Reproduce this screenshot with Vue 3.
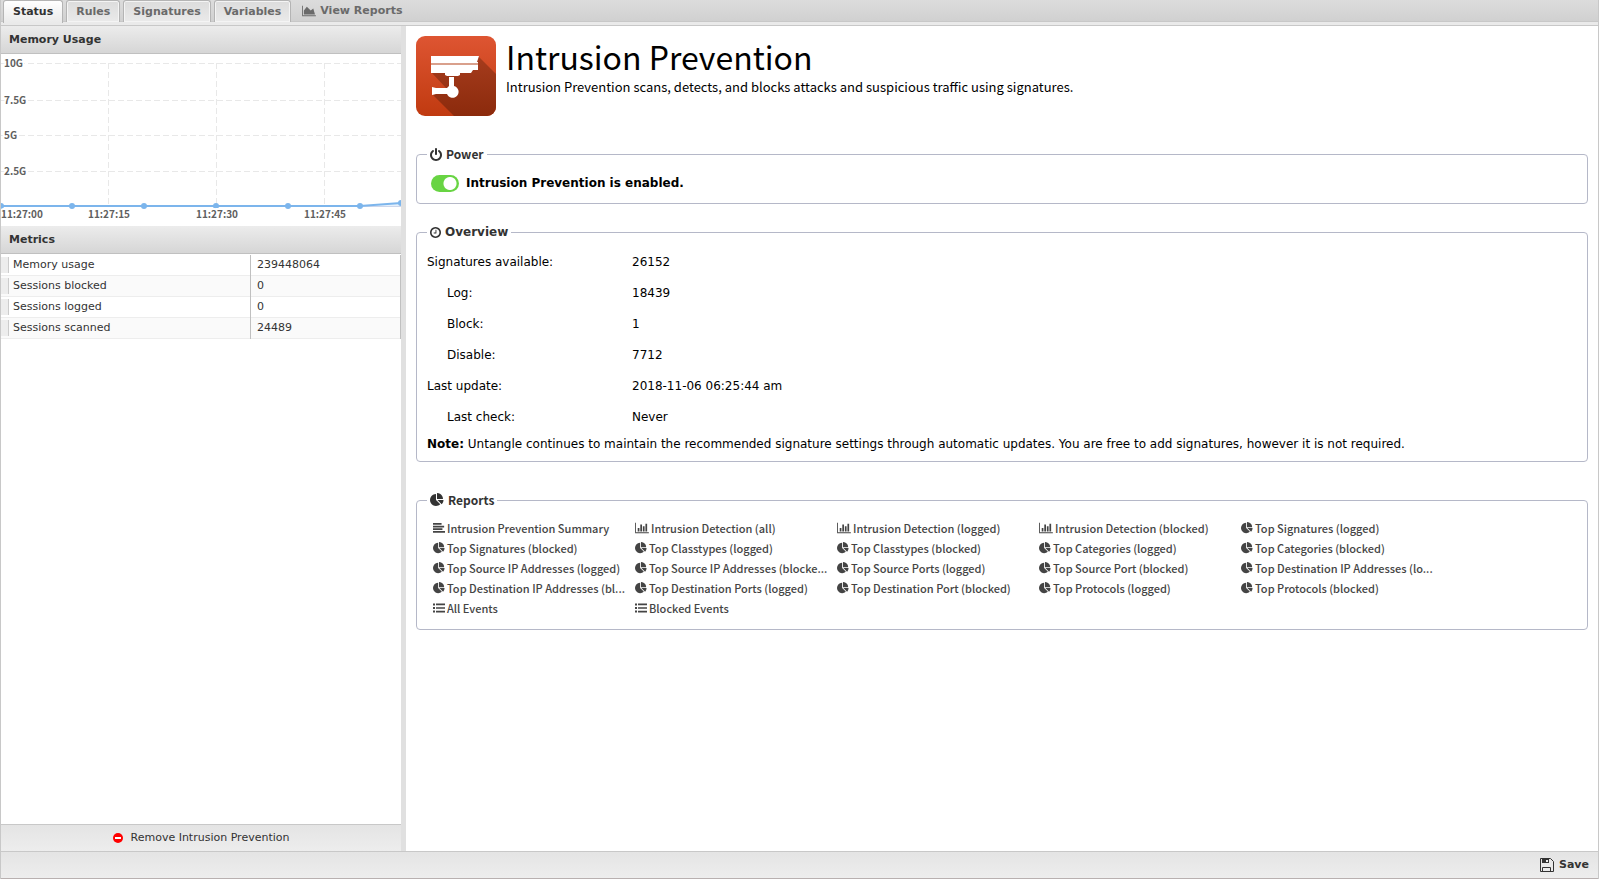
<script setup>
import { ref } from 'vue'

const tabs = ['Status', 'Rules', 'Signatures', 'Variables']
const activeTab = ref('Status')
const enabled = ref(true)

const metrics = [
  { name: 'Memory usage', value: '239448064' },
  { name: 'Sessions blocked', value: '0' },
  { name: 'Sessions logged', value: '0' },
  { name: 'Sessions scanned', value: '24489' },
]

const overview = [
  { label: 'Signatures available:', value: '26152' },
  { label: 'Log:', value: '18439', sub: true },
  { label: 'Block:', value: '1', sub: true },
  { label: 'Disable:', value: '7712', sub: true },
  { label: 'Last update:', value: '2018-11-06 06:25:44 am' },
  { label: 'Last check:', value: 'Never', sub: true },
]

const reports = [
  { icon: 'text', title: 'Intrusion Prevention Summary' },
  { icon: 'bars', title: 'Intrusion Detection (all)' },
  { icon: 'bars', title: 'Intrusion Detection (logged)' },
  { icon: 'bars', title: 'Intrusion Detection (blocked)' },
  { icon: 'pie', title: 'Top Signatures (logged)' },
  { icon: 'pie', title: 'Top Signatures (blocked)' },
  { icon: 'pie', title: 'Top Classtypes (logged)' },
  { icon: 'pie', title: 'Top Classtypes (blocked)' },
  { icon: 'pie', title: 'Top Categories (logged)' },
  { icon: 'pie', title: 'Top Categories (blocked)' },
  { icon: 'pie', title: 'Top Source IP Addresses (logged)' },
  { icon: 'pie', title: 'Top Source IP Addresses (blocke...' },
  { icon: 'pie', title: 'Top Source Ports (logged)' },
  { icon: 'pie', title: 'Top Source Port (blocked)' },
  { icon: 'pie', title: 'Top Destination IP Addresses (lo...' },
  { icon: 'pie', title: 'Top Destination IP Addresses (bl...' },
  { icon: 'pie', title: 'Top Destination Ports (logged)' },
  { icon: 'pie', title: 'Top Destination Port (blocked)' },
  { icon: 'pie', title: 'Top Protocols (logged)' },
  { icon: 'pie', title: 'Top Protocols (blocked)' },
  { icon: 'list', title: 'All Events' },
  { icon: 'list', title: 'Blocked Events' },
]

// icon paths, 1792 units high
const icons = {
  power: 'M1664 896q0 156-61 298t-164 245-245 164-298 61-298-61-245-164-164-245-61-298q0-182 80.5-343t226.5-270q43-32 95.5-25t83.5 50q32 42 24.5 94.5t-49.5 84.5q-98 74-151.5 181t-53.5 228q0 104 40.5 198.5t109.5 163.5 163.5 109.5 198.5 40.5 198.5-40.5 163.5-109.5 109.5-163.5 40.5-198.5q0-121-53.5-228t-151.5-181q-42-32-49.5-84.5t24.5-94.5q31-43 84-50t95 25q146 109 226.5 270t80.5 343zm-640-768v640q0 52-38 90t-90 38-90-38-38-90v-640q0-52 38-90t90-38 90 38 38 90z',
  clock: 'M1024 544v448q0 14-9 23t-23 9h-320q-14 0-23-9t-9-23v-64q0-14 9-23t23-9h224v-352q0-14 9-23t23-9h64q14 0 23 9t9 23zm416 352q0-148-73-273t-198-198-273-73-273 73-198 198-73 273 73 273 198 198 273 73 273-73 198-198 73-273zm224 0q0 209-103 385.5t-279.5 279.5-385.5 103-385.5-103-279.5-279.5-103-385.5 103-385.5 279.5-279.5 385.5-103 385.5 103 279.5 279.5 103 385.5z',
  pie: 'M768 890l546 546q-106 108-247.5 168t-298.5 60q-209 0-385.5-103t-279.5-279.5-103-385.5 103-385.5 279.5-279.5 385.5-103v762zm187 6h773q0 157-60 298.5t-168 247.5zm709-128h-768v-768q209 0 385.5 103t279.5 279.5 103 385.5z',
  bars: 'M640 896v512h-256v-512h256zm384-512v1024h-256v-1024h256zm1024 1152v128h-2048v-1536h128v1408h1920zm-640-896v768h-256v-768h256zm384-384v1152h-256v-1152h256z',
  area: 'M2048 1536v128h-2048v-1536h128v1408h1920zm-384-1024l256 896h-1664v-576l448-576 576 576z',
  text: 'M0 1344h1792v256h-1792zM0 946h1408v256h-1408zM0 548h1664v256h-1664zM0 150h1280v256h-1280z',
  list: 'M0 1280h300v300h-300zM0 746h300v300h-300zM0 212h300v300h-300zM450 1300h1342v260h-1342zM450 766h1342v260h-1342zM450 232h1342v260h-1342z',
}

const yTicks = [
  { y: 9, label: '10G' },
  { y: 46, label: '7.5G' },
  { y: 81, label: '5G' },
  { y: 117, label: '2.5G' },
]
const xTicks = [
  { x: 107, label: '11:27:15' },
  { x: 215, label: '11:27:30' },
  { x: 323, label: '11:27:45' },
]
const points = [[0, 152], [71, 152], [143, 152], [215, 152], [287, 152], [359, 152], [400, 149]]
const line = points.map(p => p.join(',')).join(' ')
</script>

<template>
  <div class="app">
    <nav class="tabs">
      <button
        v-for="t in tabs"
        :key="t"
        type="button"
        class="tab"
        :class="{ active: t === activeTab }"
        @click="activeTab = t"
      >{{ t }}</button>
      <a href="#reports" class="view-reports">
        <svg class="icon wide" viewBox="0 0 2048 1792"><path :d="icons.area" /></svg>
        View Reports
      </a>
    </nav>

    <div class="body">
      <aside class="side">
        <h2 class="panel-title">Memory Usage</h2>
        <svg class="chart" viewBox="0 0 400 172" role="img" aria-label="Memory usage">
          <g class="grid">
            <line v-for="t in yTicks" :key="t.label" x1="0" x2="400" :y1="t.y + 0.5" :y2="t.y + 0.5" />
            <line v-for="t in xTicks" :key="t.label" :x1="t.x + 0.5" :x2="t.x + 0.5" y1="9" y2="152" />
          </g>
          <line class="axis" x1="0" x2="400" y1="152.5" y2="152.5" />
          <polygon class="area" :points="`${line} 400,152`" />
          <polyline class="series" :points="line" />
          <circle v-for="p in points" :key="p[0]" class="dot" :cx="p[0]" :cy="p[1]" r="3" />
          <g class="labels">
            <text v-for="t in yTicks" :key="t.label" x="3" :y="t.y + 4">{{ t.label }}</text>
            <text x="0" y="164">11:27:00</text>
            <text v-for="t in xTicks" :key="t.label" :x="t.x + 1" y="164" text-anchor="middle">{{ t.label }}</text>
          </g>
        </svg>

        <h2 class="panel-title">Metrics</h2>
        <table class="metrics">
          <tbody>
            <tr v-for="m in metrics" :key="m.name">
              <td class="grip"><span></span></td>
              <th scope="row">{{ m.name }}</th>
              <td class="value">{{ m.value }}</td>
            </tr>
          </tbody>
        </table>

        <div class="side-foot">
          <button type="button" class="remove">
            <svg viewBox="0 0 10 10"><circle cx="5" cy="5" r="5" /><rect x="2" y="4" width="6" height="2" /></svg>
            Remove Intrusion Prevention
          </button>
        </div>
      </aside>

      <main class="content">
        <header class="intro">
          <svg class="logo" viewBox="0 0 80 80">
            <defs>
              <linearGradient id="logoBg" x1="0" y1="0" x2="0" y2="1">
                <stop offset="0" stop-color="#de5532" />
                <stop offset="1" stop-color="#c03a10" />
              </linearGradient>
              <linearGradient id="logoShade" x1="0" y1="0" x2="0" y2="1">
                <stop offset="0" stop-color="#a63c1d" />
                <stop offset="1" stop-color="#8b2a0c" />
              </linearGradient>
              <clipPath id="logoClip"><rect width="80" height="80" rx="9" /></clipPath>
            </defs>
            <g clip-path="url(#logoClip)">
              <rect width="80" height="80" fill="url(#logoBg)" />
              <path fill="url(#logoShade)" d="M62 20l18 18v42H38L17 59l14-6L15 36z" />
            </g>
            <path fill="#fff" d="M15 20h48l-2 6h1v2H15zM15 29h47v5h-5l-2 3H44v2l-2 1H31l-2-1v-2H15z" />
            <rect x="15" y="27" width="47" height="2" fill="#d9a08c" />
            <path fill="#fff" d="M33 41h5v9a6 6 0 1 1-7 8H20l-4 1v-8l4 1h11l2-2z" />
          </svg>
          <div>
            <h1>Intrusion Prevention</h1>
            <p>Intrusion Prevention scans, detects, and blocks attacks and suspicious traffic using signatures.</p>
          </div>
        </header>

        <fieldset class="power">
          <legend class="alt">
            <svg class="legend-power" viewBox="128 0 1536 1664"><path :d="icons.power" /></svg>
            Power
          </legend>
          <label class="switch">
            <input v-model="enabled" type="checkbox">
            <span>Intrusion Prevention is {{ enabled ? 'enabled' : 'disabled' }}.</span>
          </label>
        </fieldset>

        <fieldset class="overview">
          <legend>
            <svg class="legend-clock" viewBox="128 128 1536 1536"><path :d="icons.clock" /></svg>
            Overview
          </legend>
          <dl>
            <div v-for="o in overview" :key="o.label">
              <dt :class="{ sub: o.sub }">{{ o.label }}</dt>
              <dd>{{ o.value }}</dd>
            </div>
          </dl>
          <p><b>Note:</b> Untangle continues to maintain the recommended signature settings through automatic updates. You are free to add signatures, however it is not required.</p>
        </fieldset>

        <fieldset id="reports" class="reports">
          <legend class="alt">
            <svg class="legend-pie" viewBox="0 0 1792 1792"><path :d="icons.pie" /></svg>
            Reports
          </legend>
          <ul>
            <li v-for="r in reports" :key="r.title">
              <a href="#reports">
                <svg v-if="r.icon === 'bars'" class="icon wide" viewBox="0 0 2048 1792"><path :d="icons.bars" /></svg>
                <svg v-else class="icon" viewBox="0 0 1792 1792"><path :d="icons[r.icon]" /></svg>
                <span>{{ r.title }}</span>
              </a>
            </li>
          </ul>
        </fieldset>
      </main>
    </div>

    <footer class="foot">
      <button type="button" class="save">
        <svg viewBox="0 0 14 14">
          <path class="outline" d="M.5.5h10l3 3v10H.5z" />
          <path d="M2 1h7v4H2z" />
          <path class="hole" d="M6 2h2v2H6z" />
          <path class="outline" d="M2.5 13.5v-4h8v4" />
        </svg>
        Save
      </button>
    </footer>
  </div>
</template>

<style>
body { margin: 0; }
</style>

<style scoped>
.app { display: flex; flex-direction: column; box-sizing: border-box; min-height: 100vh; border: solid #c8c8c8; border-width: 0 1px; background: #fff; color: #333; font: 11px/16px "DejaVu Sans", sans-serif; }
button { margin: 0; font: inherit; color: inherit; cursor: pointer; }
a { color: inherit; text-decoration: none; }
.icon { flex: none; width: 12px; height: 12px; fill: currentColor; }
.icon.wide { width: 14px; }

/* tabs */
.tabs { display: flex; gap: 3px; height: 22px; padding: 0 2px; background: linear-gradient(#dcdcdc, #d0d0d0); border-bottom: 3px solid #eaeaea; box-shadow: inset 0 -1px #c8c8c8, 0 1px #c8c8c8; margin-bottom: 1px; font-weight: bold; }
.tab { height: 22px; padding: 0 9px; border: 1px solid #b4b4b4; border-bottom: 0; border-radius: 3px 3px 0 0; background: linear-gradient(#dcdcdc, #eaeaea); box-shadow: inset 0 0 0 1px #f4f4f4; font-weight: bold; line-height: 20px; color: #6a6a6a; }
.tab.active { height: 23px; background: linear-gradient(#fff, #eaeaea); box-shadow: none; color: #333; }
.view-reports { display: flex; align-items: center; gap: 4px; padding-left: 8px; color: #6a6a6a; }

.body { display: flex; flex: 1; }

/* left column */
.side { display: flex; flex-direction: column; flex: none; width: 400px; border-right: 5px solid #e0e0e0; }
.panel-title { margin: 0; padding: 0 8px; border-bottom: 1px solid #c0c0c0; background: linear-gradient(#ececec, #d6d6d6); font-size: 11px; line-height: 27px; color: #333; }
.chart { display: block; width: 100%; }
.grid line { stroke: #e8e8e8; stroke-dasharray: 6 3; }
.axis { stroke: #ccd6eb; }
.area { fill: #7cb5ec; fill-opacity: .2; }
.series { fill: none; stroke: #7cb5ec; stroke-width: 2; }
.dot { fill: #7cb5ec; }
.labels text { font: 600 10px "Noto Sans CJK SC", sans-serif; fill: #606060; stroke: #fff; stroke-width: 4px; paint-order: stroke; }

.metrics { width: 100%; margin-top: 1px; border-collapse: collapse; table-layout: fixed; }
.metrics tr { border-bottom: 1px solid #ededed; }
.metrics tr:nth-child(even) { background: #fafafa; }
.metrics td, .metrics th { height: 20px; padding: 0; line-height: 20px; font-weight: normal; text-align: left; }
.metrics .grip { width: 12px; }
.grip span { display: block; width: 7px; height: 16px; border-right: 1px solid #ccc; background: #ededed; }
.metrics .value { width: 143px; padding-left: 6px; border: solid #c0c0c0; border-width: 0 1px; }

.side-foot { display: flex; justify-content: center; margin-top: auto; border-top: 1px solid #c8c8c8; background: linear-gradient(#e4e4e4, #ededed); }
.remove { display: flex; align-items: center; gap: 8px; height: 26px; padding: 0; border: 0; background: none; }
.remove svg { width: 10px; height: 10px; fill: #f00; }
.remove rect { fill: #fff; }

/* right column */
.content { flex: 1; min-width: 0; padding: 10px; color: #000; font-size: 12px; }
.intro { display: flex; gap: 10px; font-family: "Noto Sans CJK SC", sans-serif; }
.logo { flex: none; width: 80px; height: 80px; }
h1 { margin: 0; font-size: 32px; font-weight: 400; line-height: 40px; }
.intro p { margin: 0; font-size: 13px; line-height: 22px; }

fieldset { min-width: 0; margin: 0; padding: 0 10px; border: 1px solid #b5b8c8; border-radius: 4px; }
legend { display: flex; align-items: center; gap: 4px; height: 16px; padding: 0 3px; font-size: 12px; font-weight: bold; color: #333; }
legend.alt { font-family: "Noto Sans CJK SC", sans-serif; font-weight: 600; }
legend svg { fill: currentColor; }
.legend-power { width: 12px; height: 13px; }
.legend-clock { width: 11px; height: 11px; }
.legend-pie { width: 14px; height: 14px; }

.power { margin-top: 30px; padding-bottom: 8px; }
.switch { display: flex; align-items: center; gap: 7px; height: 24px; margin-top: 9px; padding-left: 4px; font-weight: bold; }
.switch input { appearance: none; width: 28px; height: 17px; margin: 0; border-radius: 9px; background: radial-gradient(circle at 19px 50%, #fff 6px, #68d443 7px); }
.switch input:not(:checked) { background: radial-gradient(circle at 9px 50%, #fff 6px, #aaa 7px); }

.overview { margin-top: 20px; padding-bottom: 8px; }
.overview dl { margin: 7px 0 0; }
.overview dl div { display: flex; line-height: 31px; }
.overview dt { box-sizing: border-box; width: 205px; }
.overview dt.sub { padding-left: 20px; }
.overview dd { margin: 0; }
.overview p { margin: 2px 0 0; line-height: 18px; }

.reports { margin-top: 30px; padding: 0 16px 11px; }
.reports legend { margin-left: -6px; }
.reports ul { display: grid; grid-template-columns: repeat(5, 202px); margin: 10px 0 0; padding: 0; list-style: none; }
.reports a { display: flex; align-items: center; gap: 2px; height: 20px; font: 500 11px/20px "Noto Sans CJK SC", sans-serif; color: #444; }
.reports span { white-space: nowrap; }

/* bottom bar */
.foot { display: flex; justify-content: flex-end; padding: 0 9px; border-top: 1px solid #c8c8c8; border-bottom: 1px solid #b8b0b0; background: linear-gradient(#e4e4e4, #ededed); }
.save { display: flex; align-items: center; gap: 5px; height: 26px; padding: 0; border: 0; background: none; font-weight: bold; }
.save svg { width: 14px; height: 14px; fill: #333; }
.save .outline { fill: none; stroke: #333; }
.save .hole { fill: #eee; }
</style>
